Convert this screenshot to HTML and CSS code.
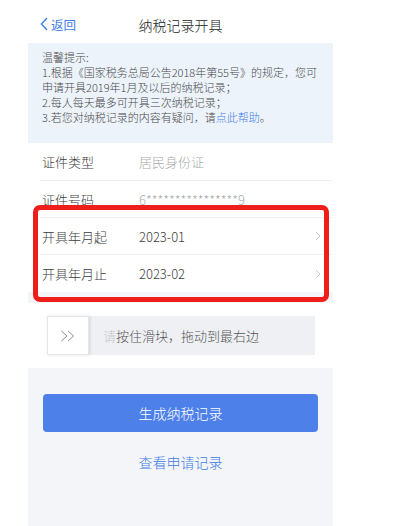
FILE: index.html
```html
<!DOCTYPE html>
<html lang="zh-CN">
<head>
<meta charset="utf-8">
<title>纳税记录开具</title>
<link rel="stylesheet" href="styles.css">
</head>
<body>
<div class="page">
  <header class="nav">
    <a class="back" href="#">
      <svg class="back-icon" width="8" height="14" viewBox="0 0 8 14"><polyline points="7,1 1.5,7 7,13" fill="none" stroke="#3f7de6" stroke-width="1.4"/></svg>
      <span>返回</span>
    </a>
    <h1 class="title">纳税记录开具</h1>
  </header>

  <div class="tip">
    <p>温馨提示:</p>
    <p>1.根据《国家税务总局公告2018年第55号》的规定，您可申请开具2019年1月及以后的纳税记录；</p>
    <p>2.每人每天最多可开具三次纳税记录；</p>
    <p>3.若您对纳税记录的内容有疑问，请<a class="help" href="#">点此帮助</a>。</p>
  </div>

  <ul class="form">
    <li class="row"><span class="label">证件类型</span><span class="value muted">居民身份证</span></li>
    <li class="row"><span class="label">证件号码</span><span class="value muted">6****************9</span></li>
    <li class="row"><span class="label">开具年月起</span><span class="value">2023-01</span>
      <svg class="arrow" width="6" height="10" viewBox="0 0 6 10"><polyline points="1,1 5,5 1,9" fill="none" stroke="#c8c8c8" stroke-width="1"/></svg></li>
    <li class="row last"><span class="label">开具年月止</span><span class="value">2023-02</span>
      <svg class="arrow" width="6" height="10" viewBox="0 0 6 10"><polyline points="1,1 5,5 1,9" fill="none" stroke="#c8c8c8" stroke-width="1"/></svg></li>
  </ul>

  <div class="gap"></div>

  <div class="slider-wrap">
    <div class="slider">
      <div class="knob">
        <svg width="16" height="12" viewBox="0 0 16 12"><polyline points="1.5,1 7,6 1.5,11" fill="none" stroke="#8a8a8a" stroke-width="1"/><polyline points="8,1 13.5,6 8,11" fill="none" stroke="#8a8a8a" stroke-width="1"/></svg>
      </div>
      <div class="track"><span class="fade">请</span>按住滑块，拖动到最右边</div>
    </div>
  </div>

  <div class="actions">
    <button class="btn" type="button">生成纳税记录</button>
    <a class="link" href="#">查看申请记录</a>
  </div>

  <div class="annot"></div>
</div>
</body>
</html>
```

FILE: styles.css
```css
* { box-sizing: border-box; }
html, body { margin: 0; padding: 0; background: #fff; }
body {
  font-family: "Noto Sans CJK SC", "Noto Sans", sans-serif;
  color: #333;
}
.page {
  position: relative;
  width: 305px;
  margin-left: 28px;
}
.nav {
  position: relative;
  height: 43px;
  display: flex;
  align-items: center;
  justify-content: center;
}
.back {
  position: absolute;
  left: 12px;
  top: 0;
  height: 43px;
  display: flex;
  align-items: center;
  gap: 3px;
  color: #3f7de6;
  font-size: 12.5px;
  text-decoration: none;
  padding-top: 5px;
}
.title {
  margin: 0;
  padding-top: 7px;
  font-size: 14px;
  font-weight: 300;
  color: #222;
}
.tip {
  background: #edf3fb;
  padding: 7px 14px 18px;
  font-size: 11px;
  line-height: 15px;
  font-weight: 300;
  color: #4a4a4a;
}
.tip p { margin: 0; }
.help { color: #3f7de6; text-decoration: none; }
.form {
  list-style: none;
  margin: 0;
  padding: 0;
}
.row {
  height: 37px;
  margin-left: 12px;
  padding-left: 2px;
  padding-right: 12px;
  display: flex;
  align-items: center;
  border-bottom: 1px solid #efefef;
  font-size: 13px;
  font-weight: 300;
}
.row:first-child { height: 38px; }
.row.last { border-bottom: none; height: 37px; }
.label { width: 97px; color: #3c3c3c; }
.value { flex: 1; color: #3c3c3c; }
.value.muted { color: #aaa; }
.arrow { flex: none; }
.gap {
  height: 11px;
  background: #f4f5f8;
}
.slider-wrap {
  padding: 13px 18px 13px 19px;
  background: #fff;
}
.slider {
  display: flex;
  height: 39px;
  background: #eef0f3;
}
.knob {
  width: 42px;
  height: 39px;
  background: #fff;
  border: 1px solid #e6e6e6;
  box-shadow: 1px 0 3px rgba(0,0,0,0.12);
  display: flex;
  align-items: center;
  justify-content: center;
}
.track {
  flex: 1;
  display: flex;
  align-items: center;
  padding-left: 14px;
  font-size: 13px;
  font-weight: 300;
  color: #555;
}
.fade { color: #c4c6ca; }
.actions {
  background: #f4f5f8;
  height: 158px;
  padding: 26px 15px 0;
  display: flex;
  flex-direction: column;
  align-items: center;
}
.btn {
  width: 275px;
  height: 38px;
  border: none;
  border-radius: 4px;
  background: #4e80ea;
  color: #fff;
  font-family: inherit;
  font-size: 14px;
  font-weight: 300;
  padding: 0;
}
.link {
  margin-top: 19px;
  line-height: 22px;
  font-size: 14px;
  font-weight: 300;
  color: #3f7de6;
  text-decoration: none;
}
.annot {
  position: absolute;
  left: 5px;
  top: 205px;
  width: 296px;
  height: 97px;
  border: 5px solid #ee1f1b;
  border-radius: 7px;
  pointer-events: none;
}
```
